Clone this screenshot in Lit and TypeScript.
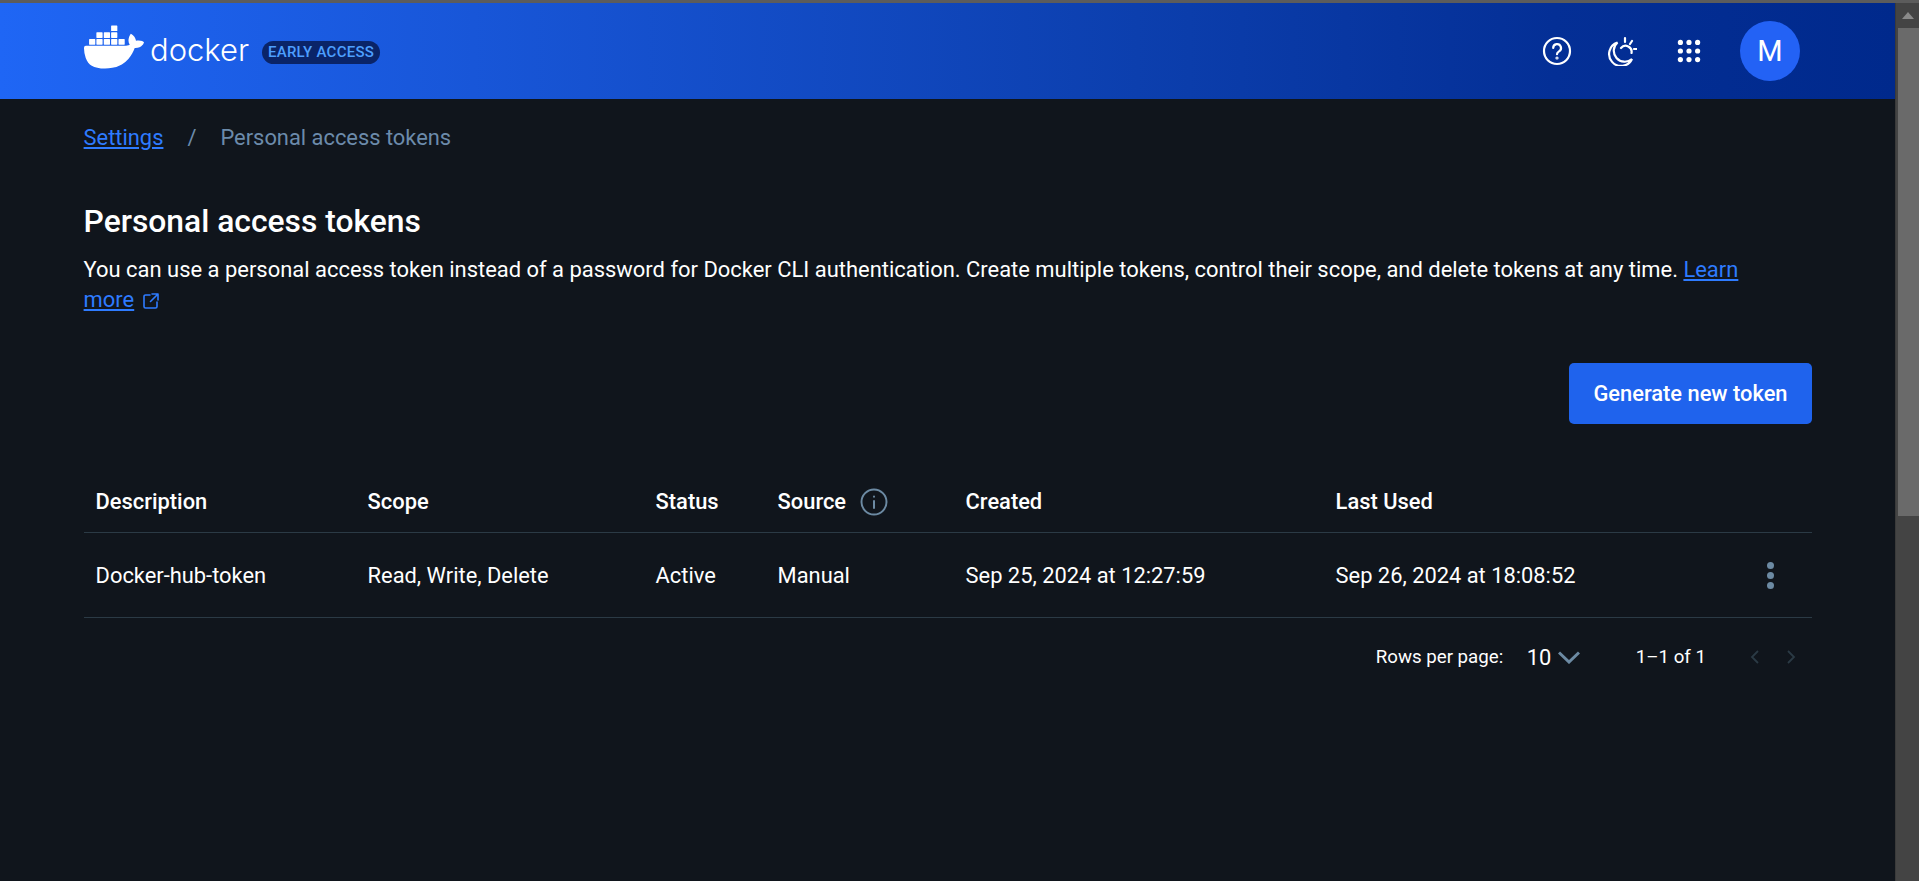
import { LitElement, html, css, svg } from 'lit';
import { customElement } from 'lit/decorators.js';

const WHALE =
  'M13.983 11.078h2.119a.186.186 0 00.186-.185V9.006a.186.186 0 00-.186-.186h-2.119a.185.185 0 00-.185.185v1.888c0 .102.083.185.185.185m-2.954-5.43h2.118a.186.186 0 00.186-.186V3.574a.186.186 0 00-.186-.185h-2.118a.185.185 0 00-.185.185v1.888c0 .102.082.185.185.185m0 2.716h2.118a.187.187 0 00.186-.186V6.29a.186.186 0 00-.186-.185h-2.118a.185.185 0 00-.185.185v1.887c0 .102.082.185.185.186m-2.93 0h2.12a.186.186 0 00.184-.186V6.29a.185.185 0 00-.185-.185H8.1a.185.185 0 00-.185.185v1.887c0 .102.083.185.185.186m-2.964 0h2.119a.186.186 0 00.185-.186V6.29a.185.185 0 00-.185-.185H5.136a.186.186 0 00-.186.185v1.887c0 .102.084.185.186.186m5.893 2.715h2.118a.186.186 0 00.186-.185V9.006a.186.186 0 00-.186-.186h-2.118a.185.185 0 00-.185.185v1.888c0 .102.082.185.185.185m-2.93 0h2.12a.185.185 0 00.184-.185V9.006a.185.185 0 00-.184-.186h-2.12a.185.185 0 00-.184.185v1.888c0 .102.083.185.185.185m-2.964 0h2.119a.185.185 0 00.185-.185V9.006a.185.185 0 00-.184-.186h-2.12a.186.186 0 00-.186.186v1.887c0 .102.084.185.186.185m-2.92 0h2.12a.185.185 0 00.184-.185V9.006a.185.185 0 00-.184-.186h-2.12a.185.185 0 00-.184.185v1.888c0 .102.082.185.185.185M23.763 9.89c-.065-.051-.672-.51-1.954-.51-.338.001-.676.03-1.01.087-.248-1.7-1.653-2.53-1.716-2.566l-.344-.199-.226.327c-.284.438-.49.922-.612 1.43-.23.97-.09 1.882.403 2.661-.595.332-1.55.413-1.744.42H.751a.751.751 0 00-.75.748 11.376 11.376 0 00.692 4.062c.545 1.428 1.355 2.48 2.41 3.124 1.18.723 3.1 1.137 5.275 1.137.983.003 1.963-.086 2.93-.266a12.248 12.248 0 003.823-1.389c.98-.567 1.86-1.288 2.61-2.136 1.252-1.418 1.998-2.997 2.553-4.4h.221c1.372 0 2.215-.549 2.68-1.009.309-.293.55-.65.707-1.046l.098-.288Z';

@customElement('app-root')
export class AppRoot extends LitElement {
  static styles = css`
    :host {
      display: block;
      height: 881px;
      overflow: hidden;
      background: #10151c;
      color: #fff;
      font-family: Roboto, 'Liberation Sans', sans-serif;
    }

    .strip {
      height: 3px;
      background: #5c5c5c;
    }

    .frame {
      display: flex;
      height: 878px;
    }

    .page {
      flex: 1;
      min-width: 0;
    }

    /* fake window scrollbar */
    .scrollbar {
      width: 24px;
      background: #444444;
      display: flex;
      flex-direction: column;
      align-items: center;
      border-left: 1px solid #3a3a3a;
      box-sizing: border-box;
    }

    .scroll-arrow {
      height: 25px;
      display: flex;
      align-items: center;
      justify-content: center;
    }

    .scroll-thumb {
      width: 21px;
      height: 488px;
      background: #6a6a6a;
      margin-left: 1px;
    }

    header {
      height: 96px;
      box-sizing: border-box;
      padding: 0 83px 0 84px;
      display: flex;
      align-items: center;
      background: linear-gradient(90deg, #1f66f5 0%, #1856d8 25%, #0c3fae 60%, #042f96 82%, #00298c 100%);
    }

    .logo {
      display: flex;
      align-items: center;
    }

    .logo svg {
      margin-bottom: 8px;
    }

    .wordmark {
      font-family: Inter, sans-serif;
      font-weight: 300;
      font-size: 31px;
      line-height: 40px;
      width: 98px;
      margin-left: 6px;
      margin-bottom: 2px;
    }

    .badge {
      margin-left: 14px;
      padding: 0 6px;
      height: 23px;
      border-radius: 12px;
      background: #0a2468;
      color: #4d9fff;
      font-size: 15px;
      font-weight: 500;
      line-height: 23px;
      letter-spacing: 0.25px;
      margin-top: 2px;
    }

    .actions {
      margin-left: auto;
      display: flex;
      align-items: center;
      margin-right: 12px;
    }

    .actions svg {
      display: block;
    }

    .help {
      margin-right: 35px;
    }

    .sun {
      margin-right: 39px;
    }

    .apps {
      margin-right: 38px;
    }

    .avatar {
      width: 60px;
      height: 60px;
      border-radius: 50%;
      background: #2362f5;
      display: flex;
      align-items: center;
      justify-content: center;
      font-size: 29px;
    }

    main {
      padding: 0 83px 0 83.6px;
    }

    .crumbs {
      display: flex;
      align-items: center;
      height: 26px;
      margin-top: 25px;
      font-size: 21.87px;
      color: #6c8bab;
    }

    a {
      color: #2e7bff;
      text-decoration: underline;
    }

    .sep {
      margin: 0 24px;
    }

    h1 {
      margin: 53px 0 0;
      font-size: 31.8px;
      line-height: 36px;
      font-weight: 500;
    }

    .intro {
      margin: 16px 0 0;
      max-width: 1700px;
      font-size: 21.94px;
      line-height: 30px;
    }

    .intro svg {
      vertical-align: -3px;
      margin-left: 2px;
    }

    .toolbar {
      display: flex;
      justify-content: flex-end;
      margin-top: 48px;
    }

    button {
      height: 61px;
      width: 243px;
      border: none;
      border-radius: 5px;
      background: #1f63ed;
      color: #fff;
      font: 500 21.87px Roboto, sans-serif;
    }

    .row {
      display: grid;
      grid-template-columns: 272px 288px 122px 188px 370px 1fr 96px;
      align-items: center;
      border-bottom: 1px solid #2b3a45;
      font-size: 21.87px;
    }

    .row > div {
      padding-left: 12px;
    }

    .head {
      height: 61px;
      margin-top: 47px;
      font-weight: 500;
    }

    .head .with-info {
      display: flex;
      align-items: center;
      gap: 14px;
    }

    .body {
      height: 84px;
    }

    .kebab {
      display: flex;
      flex-direction: column;
      gap: 3px;
      align-items: center;
    }

    .kebab i {
      width: 7px;
      height: 7px;
      border-radius: 50%;
      background: #6c8aa3;
    }

    .pager {
      display: flex;
      justify-content: flex-end;
      align-items: center;
      height: 78px;
      font-size: 18.7px;
    }

    .size {
      font-size: 21.87px;
      margin-left: 23.5px;
    }

    .pager .caret {
      margin-left: 7px;
    }

    .range {
      margin-left: 55.5px;
    }

    .prev {
      margin-left: 44px;
    }

    .next {
      margin: 0 16px 0 26px;
    }
  `;

  render() {
    return html`
      <div class="strip"></div>
      <div class="frame">
        <div class="page">
          <header>
            <div class="logo">
              <svg width="60" height="60" viewBox="0 0 24 24" fill="#fff"><path d=${WHALE}></path></svg>
              <span class="wordmark">docker</span>
              <span class="badge">EARLY ACCESS</span>
            </div>
            <div class="actions">
              <svg class="help" width="30" height="30" viewBox="0 0 30 30" fill="none" stroke="#fff" stroke-width="2.2" stroke-linecap="round">
                <circle cx="15" cy="15" r="13"></circle>
                <path d="M11.2 12a3.9 3.9 0 1 1 5.8 3.4c-1.3.8-2 1.5-2 2.8"></path>
                <circle cx="15" cy="22" r=".5" fill="#fff"></circle>
              </svg>
              <svg class="sun" width="30" height="30" viewBox="0 0 30 30" fill="none" stroke="#fff" stroke-width="2.2" stroke-linecap="round">
                <path d="M10.5 6.5a12 12 0 1 0 14.5 16.5 10 10 0 0 1-14.5-16.5Z"></path>
                <path d="M14 12a6 6 0 0 1 10.5 5M18 2v4M25 5l-2 3M27 13h3"></path>
              </svg>
              <svg class="apps" width="26" height="26" viewBox="0 0 26 26" fill="#fff">
                ${[4.4, 13, 21.6].map((y) =>
                  [4.4, 13, 21.6].map((x) => svg`<circle cx=${x} cy=${y} r="2.6"></circle>`)
                )}
              </svg>
              <div class="avatar">M</div>
            </div>
          </header>
          <main>
            <nav class="crumbs">
              <a href="#">Settings</a>
              <span class="sep">/</span>
              <span>Personal access tokens</span>
            </nav>
            <h1>Personal access tokens</h1>
            <p class="intro">
              You can use a personal access token instead of a password for Docker CLI authentication. Create multiple
              tokens, control their scope, and delete tokens at any time.
              <a href="#">Learn</a>
              <a href="#">more</a>
              <svg width="18" height="18" viewBox="0 0 18 18" fill="none" stroke="#2e7bff" stroke-width="1.6" stroke-linecap="round" stroke-linejoin="round">
                <path d="M8 3H3.5A1.5 1.5 0 0 0 2 4.5v10A1.5 1.5 0 0 0 3.5 16h10a1.5 1.5 0 0 0 1.5-1.5V10M10 2h6v6M16 2 8.5 9.5"></path>
              </svg>
            </p>
            <div class="toolbar"><button>Generate new token</button></div>
            <div class="row head">
              <div>Description</div>
              <div>Scope</div>
              <div>Status</div>
              <div class="with-info">
                Source
                <svg width="28" height="28" viewBox="0 0 28 28" fill="none" stroke="#6c8aa3" stroke-width="2" stroke-linecap="round">
                  <circle cx="14" cy="14" r="12.5"></circle>
                  <path d="M14 13v7M14 8.5v.2"></path>
                </svg>
              </div>
              <div>Created</div>
              <div>Last Used</div>
              <div></div>
            </div>
            <div class="row body">
              <div>Docker-hub-token</div>
              <div>Read, Write, Delete</div>
              <div>Active</div>
              <div>Manual</div>
              <div>Sep 25, 2024 at 12:27:59</div>
              <div>Sep 26, 2024 at 18:08:52</div>
              <div class="kebab"><i></i><i></i><i></i></div>
            </div>
            <div class="pager">
              <span>Rows per page:</span>
              <span class="size">10</span>
              <svg class="caret" width="22" height="14" viewBox="0 0 22 14" fill="none" stroke="#6c8aa3" stroke-width="3">
                <path d="M1 2.5 11 12 21 2.5"></path>
              </svg>
              <span class="range">1–1 of 1</span>
              <svg class="prev" width="10" height="14" viewBox="0 0 10 14" fill="none" stroke="#2b3a45" stroke-width="1.8">
                <path d="M8 1 2 7l6 6"></path>
              </svg>
              <svg class="next" width="10" height="14" viewBox="0 0 10 14" fill="none" stroke="#2b3a45" stroke-width="1.8">
                <path d="m2 1 6 6-6 6"></path>
              </svg>
            </div>
          </main>
        </div>
        <div class="scrollbar">
          <div class="scroll-arrow">
            <svg width="12" height="7" viewBox="0 0 12 7" fill="#8a8a8a"><path d="M6 0 12 7H0Z"></path></svg>
          </div>
          <div class="scroll-thumb"></div>
        </div>
      </div>
    `;
  }
}
